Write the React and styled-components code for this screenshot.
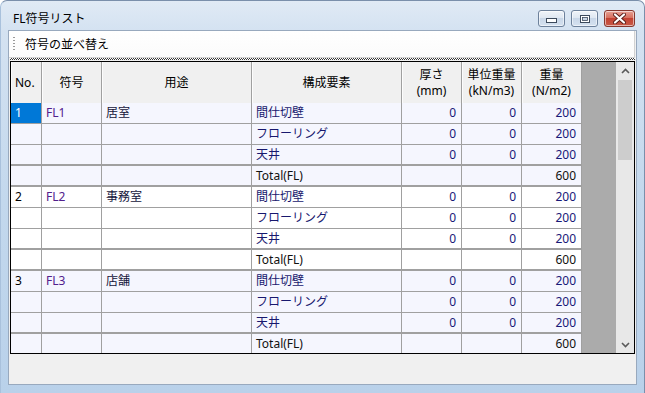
import React from 'react';
import styled, { createGlobalStyle } from 'styled-components';

const Global = createGlobalStyle`
  html, body { margin: 0; padding: 0; background: #fff; }
  body { font-family: "Noto Sans", "Noto Sans CJK JP", sans-serif; font-size: 12px; }
  * { box-sizing: border-box; }
`;

const Window = styled.div`
  width: 645px;
  height: 393px;
  display: flex;
  flex-direction: column;
  border: 1px solid #7a8fab;
  border-left-color: #a9c1dc;
  border-bottom: none;
  border-radius: 7px 7px 0 0;
  background: linear-gradient(to bottom, #e0eaf5 0px, #d4e2f1 30px, #c3d8ed 200px, #b9d1ea 100%);
  overflow: hidden;
`;

const TitleBar = styled.div`
  height: 29px;
  flex: none;
  display: flex;
  align-items: flex-start;
  padding: 9px 9px 0 12px;
`;

const Title = styled.div`
  flex: 1;
  line-height: 18px;
  font-size: 12px;
  color: #000;
`;

const Controls = styled.div`
  display: flex;
  gap: 6px;
`;

const CtlButton = styled.div`
  width: ${p => p.$w}px;
  height: 17px;
  border-radius: 3px;
  border: 1px solid ${p => (p.$close ? '#85372e' : '#6d819b')};
  background: ${p =>
    p.$close
      ? 'linear-gradient(#e7a195, #d7705f 45%, #c34232 50%, #c85a48)'
      : 'linear-gradient(#f0f4f9, #dfe8f2 45%, #c9d7e8 50%, #d5e2f0)'};
  box-shadow: inset 0 0 0 1px rgba(255, 255, 255, 0.55);
  display: flex;
  align-items: center;
  justify-content: center;
`;

const Client = styled.div`
  flex: 1;
  margin: 0 7px 8px 7px;
  border: 1px solid #98a9be;
  background: #f0f0f0;
  display: flex;
  flex-direction: column;
  min-height: 0;
`;

const Toolbar = styled.div`
  height: 27px;
  flex: none;
  display: flex;
  align-items: center;
  padding-left: 4px;
  background: linear-gradient(#ffffff, #fbfbfb);
  border-bottom: 1px solid #d2d2d2;
  border-right: 1px solid #d2d2d2;
  margin-right: 1px;
`;

const Gripper = styled.div`
  width: 2px;
  height: 15px;
  background-image: repeating-linear-gradient(to bottom, #9a9a9a 0 1px, transparent 1px 3px);
`;

const ToolLabel = styled.span`
  margin-left: 10px;
  color: #000;
  font-size: 12px;
`;

const Splitter = styled.div`
  height: 3px;
  flex: none;
  margin: 0 1px;
  background: repeating-conic-gradient(#3a3a3a 0 25%, #ffffff 0 50%) 0 0 / 2px 2px;
  border-bottom: 1px solid #f0f0f0;
`;

const GridFrame = styled.div`
  height: 293px;
  flex: none;
  margin: 0 1px;
  border: 1px solid #000;
  display: flex;
  overflow: hidden;
  background: #ababab;
`;

const Table = styled.div`
  width: 571px;
  flex: none;
  display: flex;
  flex-direction: column;
`;

const COLS = '31px 60px 150px 150px 60px 60px 60px';

const HeaderRow = styled.div`
  display: grid;
  grid-template-columns: ${COLS};
  height: 41px;
  flex: none;
`;

const HeaderCell = styled.div`
  background: #f0f0f0;
  border-right: 1px solid #a0a0a0;
  box-shadow: inset 1px 0 0 #fcfcfc;
  display: flex;
  flex-direction: column;
  align-items: ${p => (p.$left ? 'flex-start' : 'center')};
  justify-content: center;
  padding-left: ${p => (p.$left ? '4px' : '0')};
  color: #000;
  line-height: 16px;
  font-size: 12px;
`;

const Row = styled.div`
  display: grid;
  grid-template-columns: ${COLS};
  height: 21px;
  flex: none;
  background: ${p => p.$bg};
  border-bottom: ${p => (p.$thick ? 2 : 1)}px solid #a0a0a0;
`;

const Cell = styled.div`
  border-right: 1px solid #a0a0a0;
  display: flex;
  align-items: center;
  justify-content: ${p => (p.$right ? 'flex-end' : 'flex-start')};
  padding: 0 ${p => (p.$right ? '5px' : '0')} 0 ${p => (p.$right ? '0' : '4px')};
  color: ${p => p.$color || '#000'};
  background: ${p => (p.$selected ? '#0078d7' : 'transparent')};
  ${p => (p.$selected ? 'color: #fff;' : '')}
  font-size: 12px;
  line-height: 14px;
  white-space: nowrap;
  overflow: hidden;
`;

const Empty = styled.div`
  flex: 1;
  background: #ababab;
`;

const ScrollBar = styled.div`
  width: 18px;
  flex: none;
  background: #e8e8e8;
  display: flex;
  flex-direction: column;
  align-items: center;
`;

const ArrowBox = styled.div`
  height: 17px;
  width: 100%;
  flex: none;
  display: flex;
  align-items: center;
  justify-content: center;
`;

const Track = styled.div`
  flex: 1;
  width: 100%;
  padding: 1px 2px 0 2px;
`;

const Thumb = styled.div`
  height: 80px;
  width: 100%;
  background: #cdcdcd;
`;

const BottomPane = styled.div`
  flex: 1;
  background: #f0f0f0;
`;

const CODE = '#52208c';
const USE = '#14143a';
const ITEM = '#18186e';
const NUM = '#181878';
const TOTAL = '#111111';

const groups = [
  { no: '1', code: 'FL1', use: '居室', bg: '#f5f6fe' },
  { no: '2', code: 'FL2', use: '事務室', bg: '#ffffff' },
  { no: '3', code: 'FL3', use: '店舗', bg: '#f5f6fe' },
];

const items = [
  { name: '間仕切壁', t: '0', u: '0', w: '200' },
  { name: 'フローリング', t: '0', u: '0', w: '200' },
  { name: '天井', t: '0', u: '0', w: '200' },
  { name: 'Total(FL)', t: '', u: '', w: '600', total: true },
];

const Chevron = ({ up }) => (
  <svg width="9" height="6" viewBox="0 0 9 6">
    <path
      d={up ? 'M1 5 L4.5 1.5 L8 5' : 'M1 1 L4.5 4.5 L8 1'}
      fill="none"
      stroke="#5a5a5a"
      strokeWidth="1.6"
    />
  </svg>
);

export default function App() {
  return (
    <>
      <Global />
      <Window>
        <TitleBar>
          <Title>FL符号リスト</Title>
          <Controls>
            <CtlButton $w={27}>
              <svg width="11" height="5" viewBox="0 0 11 5" style={{ marginTop: 4 }}>
                <rect x="0.5" y="0.5" width="10" height="4" fill="#fff" stroke="#3c4a5c" />
              </svg>
            </CtlButton>
            <CtlButton $w={27}>
              <svg width="10" height="8" viewBox="0 0 10 8">
                <rect x="0.5" y="0.5" width="9" height="7" fill="#fff" stroke="#3c4a5c" />
                <rect x="2.5" y="2.5" width="5" height="3" fill="#c9d6e6" stroke="#3c4a5c" strokeWidth="0.8" />
              </svg>
            </CtlButton>
            <CtlButton $w={31} $close>
              <svg width="13" height="11" viewBox="0 0 13 11">
                <path d="M2 1.5 L11 9.5 M11 1.5 L2 9.5" stroke="#5b1f19" strokeWidth="4" strokeLinecap="round" />
                <path d="M2 1.5 L11 9.5 M11 1.5 L2 9.5" stroke="#ffffff" strokeWidth="2.2" strokeLinecap="round" />
              </svg>
            </CtlButton>
          </Controls>
        </TitleBar>
        <Client>
          <Toolbar>
            <Gripper />
            <ToolLabel>符号の並べ替え</ToolLabel>
          </Toolbar>
          <Splitter />
          <GridFrame>
            <Table>
              <HeaderRow>
                <HeaderCell $left>No.</HeaderCell>
                <HeaderCell>符号</HeaderCell>
                <HeaderCell>用途</HeaderCell>
                <HeaderCell>構成要素</HeaderCell>
                <HeaderCell>
                  <span>厚さ</span>
                  <span>(mm)</span>
                </HeaderCell>
                <HeaderCell>
                  <span>単位重量</span>
                  <span>(kN/m3)</span>
                </HeaderCell>
                <HeaderCell>
                  <span>重量</span>
                  <span>(N/m2)</span>
                </HeaderCell>
              </HeaderRow>
              {groups.map((g, gi) =>
                items.map((it, i) => (
                  <Row key={`${gi}-${i}`} $bg={g.bg} $thick={i >= 2}>
                    <Cell $selected={gi === 0 && i === 0}>{i === 0 ? g.no : ''}</Cell>
                    <Cell $color={CODE}>{i === 0 ? g.code : ''}</Cell>
                    <Cell $color={USE}>{i === 0 ? g.use : ''}</Cell>
                    <Cell $color={it.total ? TOTAL : ITEM}>{it.name}</Cell>
                    <Cell $right $color={NUM}>{it.t}</Cell>
                    <Cell $right $color={NUM}>{it.u}</Cell>
                    <Cell $right $color={it.total ? TOTAL : NUM}>{it.w}</Cell>
                  </Row>
                ))
              )}
            </Table>
            <Empty />
            <ScrollBar>
              <ArrowBox>
                <Chevron up />
              </ArrowBox>
              <Track>
                <Thumb />
              </Track>
              <ArrowBox>
                <Chevron />
              </ArrowBox>
            </ScrollBar>
          </GridFrame>
          <BottomPane />
        </Client>
      </Window>
    </>
  );
}
